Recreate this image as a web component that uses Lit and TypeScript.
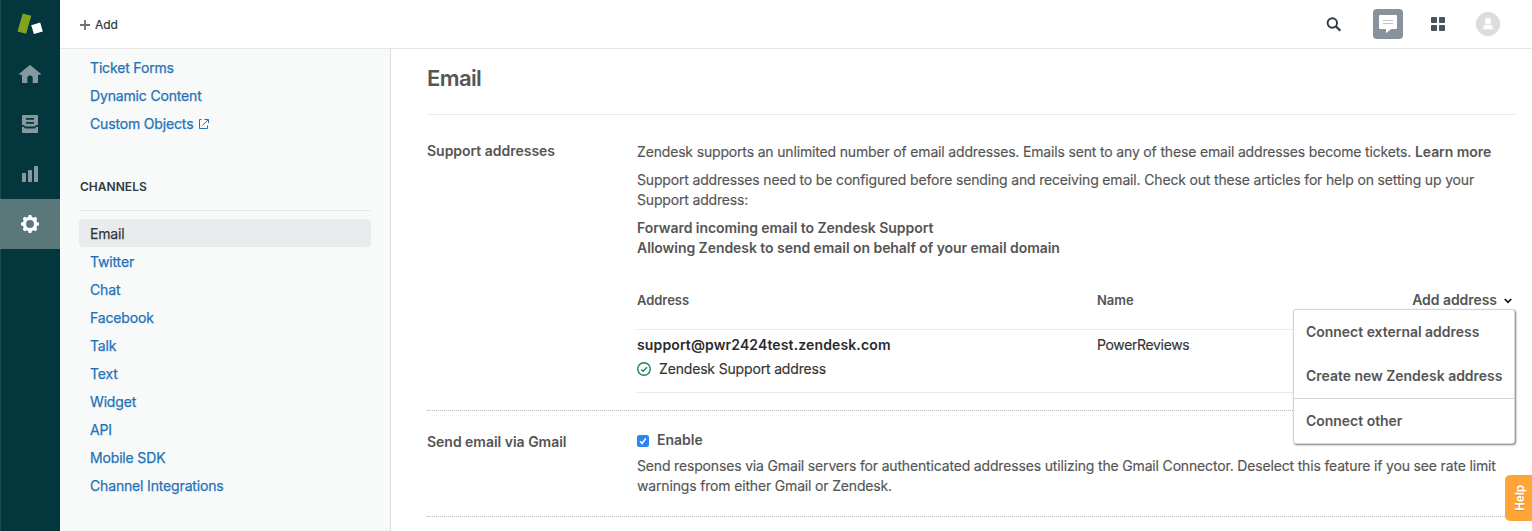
import { LitElement, html, css, svg } from "lit";
import { customElement } from "lit/decorators.js";
import { classMap } from "lit/directives/class-map.js";

const font = css`"Inter", "Liberation Sans", sans-serif`;

@customElement("nav-rail")
class NavRail extends LitElement {
  static styles = css`
    :host { display: flex; flex-direction: column; width: 60px; background: #03363d; box-shadow: inset 1px 0 #1d4a50; }
    .cell { height: 50px; display: flex; align-items: center; justify-content: center; color: #859a9e; }
    .logo { height: 49px; }
    .active { background: #5a777a; color: #fff; }
    svg { display: block; }
  `;
  render() {
    const teeth = [0, 45, 90, 135, 180, 225, 270, 315];
    return html`
      <div class="cell logo">
        <svg width="60" height="49"><path d="M22.7 13.4 31.3 15.8 26.1 33.8 17.5 31.4Z" fill="#82a31d"/><path d="M31.2 25.2 40.2 22.6 42.8 31.4 33.9 34.1Z" fill="#fff"/></svg>
      </div>
      <div class="cell">
        <svg width="24" height="20" viewBox="0 0 24 20" fill="currentColor"><path d="M11.2 1.4a1.2 1.2 0 0 1 1.6 0l9.7 8.1c.7.6.4 1.2-.3 1.2H20v7.5c0 .6-.3.9-.9.9h-4.4v-5a2.7 2.7 0 0 0-5.4 0v5H4.9c-.6 0-.9-.3-.9-.9v-7.5H1.8c-.7 0-1-.6-.3-1.2z"/></svg>
      </div>
      <div class="cell">
        <svg width="18" height="20" viewBox="0 0 18 20" fill="currentColor"><path fill-rule="evenodd" d="M2 1h14c.6 0 1 .4 1 1v9h-1.500c-.8 0-1.200 1.500-2 1.500h-9c-.8 0-1.200-1.500-2-1.500H1V2c0-.6.4-1 1-1zM5 4v1.700h8V4zM5 8v1.700h8V8z"/><path d="M1 12.800h1.200c.9 0 1.200 1.700 2.200 1.700h9.200c1 0 1.300-1.700 2.200-1.700H17V18c0 .6-.4 1-1 1H2c-.6 0-1-.4-1-1z"/></svg>
      </div>
      <div class="cell">
        <svg width="16" height="16" fill="currentColor"><rect y="7" width="4" height="9" rx=".7"/><rect x="6" y="4" width="4" height="12" rx=".7"/><rect x="12" width="4" height="16" rx=".7"/></svg>
      </div>
      <div class="cell active">
        <svg width="20" height="20" viewBox="-10 -10 20 20"><circle r="5.600" fill="none" stroke="currentColor" stroke-width="3.300"/>${teeth.map(
          (a) => svg`<path d="M-2.200-6 -1.300-9h2.600L2.200-6z" fill="currentColor" transform="rotate(${a})"/>`
        )}</svg>
      </div>
    `;
  }
}

@customElement("top-bar")
class TopBar extends LitElement {
  static styles = css`
    :host { display: flex; height: 48px; align-items: center; justify-content: space-between; padding: 0 32px 0 20px; border-bottom: 1px solid #e4e6e8; background: #fff; }
    .add { display: flex; align-items: center; gap: 5px; padding-top: 2px; font: 400 12px/20px ${font}; color: #2f3941; letter-spacing: -.1px; -webkit-text-stroke: .2px; }
    .tools { display: flex; align-items: center; }
    .search { margin-right: 31px; }
    .chat { width: 30px; height: 30px; border-radius: 4px; background: #87929d; margin-right: 28px; }
    .grid { margin-right: 31px; }
    svg { display: block; }
  `;
  render() {
    return html`
      <div class="add"><svg width="10" height="10"><path d="M5 0v10M0 5h10" stroke="#68737d" stroke-width="1.800"/></svg><span>Add</span></div>
      <div class="tools">
        <svg class="search" width="16" height="15" fill="none" stroke="#2f3941"><circle cx="6.300" cy="6" r="4.700" stroke-width="1.900"/><path d="m9.800 9.300 4.500 4.400" stroke-width="2.200"/></svg>
        <div class="chat"><svg width="30" height="30"><path fill="#fff" d="M7 6h16a1 1 0 0 1 1 1v12a1 1 0 0 1-1 1h-4.700L13 24.200V20H7a1 1 0 0 1-1-1V7a1 1 0 0 1 1-1z"/><path d="M10 11.500h10M10 14.500h10" stroke="#c0c6cb"/></svg></div>
        <svg class="grid" width="14" height="14" fill="#49545c"><rect width="6" height="6" rx=".8"/><rect x="8" width="6" height="6" rx=".8"/><rect y="8" width="6" height="6" rx=".8"/><rect x="8" y="8" width="6" height="6" rx=".8"/></svg>
        <svg width="24" height="24"><circle cx="12" cy="12" r="12" fill="#ddd"/><circle cx="12" cy="9.200" r="3.100" fill="#fff"/><path d="M7 17.200c0-3 1.700-4.400 3.400-4.400.9.600 2.300.6 3.200 0 1.700 0 3.400 1.400 3.400 4.400z" fill="#fff"/></svg>
      </div>
    `;
  }
}

@customElement("side-menu")
class SideMenu extends LitElement {
  static styles = css`
    :host { box-sizing: border-box; width: 331px; padding: 5px 20px 0 19px; background: #f8f9f9; border-right: 1px solid #d8dcde; font: 400 14px/28px ${font}; letter-spacing: -.16px; }
    .item { box-sizing: border-box; display: flex; align-items: center; height: 28px; padding: 0 11px; color: #1f73b7; gap: 5px; -webkit-text-stroke: .25px; }
    .channel { padding-top: 2px; }
    .current { background: #e9ebed; color: #2f3941; border-radius: 4px; margin-right: -1px; }
    .title { margin: 39px 0 8px 1px; padding-bottom: 13px; border-bottom: 1px solid #e4e7e8; font-size: 12px; line-height: 20px; font-weight: 600; color: #2f3941; letter-spacing: 0.02px; }
  `;
  render() {
    const channels = ["Email", "Twitter", "Chat", "Facebook", "Talk", "Text", "Widget", "API", "Mobile SDK", "Channel Integrations"];
    return html`
      <div class="item">Ticket Forms</div>
      <div class="item">Dynamic Content</div>
      <div class="item">Custom Objects
        <svg width="11" height="10" fill="none" stroke="currentColor"><path d="M3.500.5h-2v9h8V6.500M6.500.5h4V4M10.200.8 4.700 6.300"/></svg>
      </div>
      <div class="title">CHANNELS</div>
      ${channels.map((c, i) => html`<div class=${classMap({ item: true, channel: true, current: i === 0 })}>${c}</div>`)}
    `;
  }
}

@customElement("address-menu")
class AddressMenu extends LitElement {
  static styles = css`
    :host { display: block; box-sizing: border-box; width: 222px; background: #fff; border: 1px solid #d5d5d5; border-radius: 3px; box-shadow: 1px 1px 2px rgba(0,0,0,.5); font: 600 14px/44px ${font}; color: #555; letter-spacing: -.03px; }
    .option { height: 44px; padding-left: 12px; white-space: nowrap; }
    .separated { border-top: 1px solid #d5d5d5; }
  `;
  render() {
    return html`
      <div class="option">Connect external address</div>
      <div class="option">Create new Zendesk address</div>
      <div class="option separated">Connect other</div>
    `;
  }
}

@customElement("email-settings")
class EmailSettings extends LitElement {
  static styles = css`
    :host { display: block; flex: 1; min-width: 0; padding: 0 17px 0 36px; background: #fff; color: #555; font: 400 14px/20px ${font}; letter-spacing: -.165px; }
    h1 { margin: 0; height: 65px; border-bottom: 1px solid #e9e9e9; font: 600 22px/59px ${font}; letter-spacing: -.6px; }
    .section { display: grid; grid-template-columns: 210px 1fr; border-bottom: 1px dotted #bbb; }
    .support { padding: 27px 0 17px; }
    .gmail { padding: 19px 0 20px; }
    h2 { margin: 0; font-size: 14px; line-height: 18px; font-weight: 600; letter-spacing: -.02px; }
    .gmail h2 { line-height: 23px; }
    p { margin: 0 0 8px; white-space: nowrap; }
    p, .text, .verified, .name { -webkit-text-stroke: .15px; }
    b { font-weight: 600; letter-spacing: -.055px; -webkit-text-stroke: 0; }
    .row { display: grid; grid-template-columns: 460px 1fr auto; border-bottom: 1px solid #e9e9e9; }
    .head { margin-top: 32px; height: 39px; font-weight: 600; letter-spacing: -.05px; }
    .head .small { font-size: 13px; line-height: 21px; }
    .entry { padding-top: 5px; height: 57px; color: #333; }
    .entry b { color: #2b2b2b; letter-spacing: .13px; }
    .name { letter-spacing: -.35px; }
    .verified { display: flex; align-items: center; gap: 8px; margin-top: 4px; }
    .picker { position: relative; display: flex; align-items: center; gap: 7px; height: 20px; padding-right: 3px; }
    .picker > svg { margin-top: 2px; }
    address-menu { position: absolute; top: 19px; right: 0; z-index: 2; }
    .enable { display: flex; align-items: center; gap: 8px; margin-bottom: 6px; font-weight: 600; letter-spacing: 0; }
    .enable svg { margin-top: 2px; }
    .text { white-space: nowrap; }
  `;
  render() {
    return html`
      <h1>Email</h1>
      <div class="section support">
        <h2>Support addresses</h2>
        <div>
          <p>Zendesk supports an unlimited number of email addresses. Emails sent to any of these email addresses become tickets. <b>Learn more</b></p>
          <p>Support addresses need to be configured before sending and receiving email. Check out these articles for help on setting up your<br>Support address:</p>
          <p><b>Forward incoming email to Zendesk Support<br>Allowing Zendesk to send email on behalf of your email domain</b></p>
          <div class="row head">
            <span class="small">Address</span><span class="small">Name</span>
            <div class="picker"><span>Add address</span>
              <svg width="8" height="6" fill="none" stroke="#111" stroke-width="1.700"><path d="m.7 1 3.300 3.300L7.300 1"/></svg>
              <address-menu></address-menu>
            </div>
          </div>
          <div class="row entry">
            <div>
              <b>support@pwr2424test.zendesk.com</b>
              <div class="verified">
                <svg width="14" height="14" fill="none" stroke="#1f8458" stroke-width="1.400"><circle cx="7" cy="7" r="6.300"/><path d="M4.200 7.400 6.100 9.200l3.900-4"/></svg>
                <span>Zendesk Support address</span>
              </div>
            </div>
            <span class="name">PowerReviews</span>
          </div>
        </div>
      </div>
      <div class="section gmail">
        <h2>Send email via Gmail</h2>
        <div>
          <div class="enable"><svg width="12" height="12"><rect width="12" height="12" rx="2.500" fill="#2a86f5"/><path d="m3.100 6.300 2 2.200L8.800 3.400" fill="none" stroke="#fff" stroke-width="1.600"/></svg><span>Enable</span></div>
          <div class="text">Send responses via Gmail servers for authenticated addresses utilizing the Gmail Connector. Deselect this feature if you see rate limit<br>warnings from either Gmail or Zendesk.</div>
        </div>
      </div>
    `;
  }
}

@customElement("app-root")
class AppRoot extends LitElement {
  static styles = css`
    :host { display: flex; position: relative; width: 1532px; height: 531px; overflow: hidden; background: #fff; }
    .page { flex: 1; min-width: 0; display: flex; flex-direction: column; }
    .body { flex: 1; min-height: 0; display: flex; }
    .help { position: absolute; right: 0; top: 475px; width: 27px; height: 46px; border-radius: 5px 0 0 5px; background: #ffa538; display: flex; align-items: center; justify-content: center; }
    .help span { writing-mode: vertical-rl; transform: rotate(180deg); margin-left: 3px; font: 700 11.500px/14px ${font}; color: #fff; text-shadow: -1px 0 1px rgba(0,0,0,.15); }
  `;
  render() {
    return html`
      <nav-rail></nav-rail>
      <div class="page">
        <top-bar></top-bar>
        <div class="body"><side-menu></side-menu><email-settings></email-settings></div>
      </div>
      <div class="help"><span>Help</span></div>
    `;
  }
}
